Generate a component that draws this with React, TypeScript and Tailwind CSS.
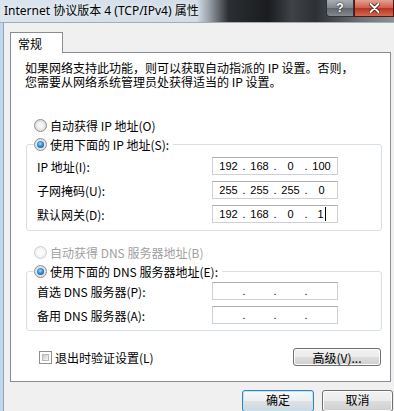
import type { ReactNode } from "react";

function Radio({ checked = false, disabled = false }: { checked?: boolean; disabled?: boolean }) {
  return (
    <span
      className={`flex h-[13px] w-[13px] shrink-0 items-center justify-center rounded-full border ${
        disabled
          ? "border-[#cfcfcf] bg-[radial-gradient(circle,#fbfbfb_30%,#e6e6e6_100%)]"
          : "border-[#8e8f8f] bg-[radial-gradient(circle,#f7f7f7_25%,#cdcdcd_100%)]"
      }`}
    >
      {checked && (
        <span className="h-[7px] w-[7px] rounded-full bg-[radial-gradient(circle_at_45%_40%,#a4dcff_0%,#2f8bd9_45%,#0c3b70_100%)]" />
      )}
    </span>
  );
}

function IpBox({ values, cursor = false }: { values?: string[]; cursor?: boolean }) {
  const fields = values ?? ["", "", "", ""];
  return (
    <div className="flex h-[18px] w-[126px] items-center border border-[#cdd0d5] border-t-[#abadb3] bg-white pl-[2px] font-['Liberation_Sans',sans-serif] text-[11px] leading-none text-black">
      {fields.map((v, i) => (
        <div key={i} className="flex items-center">
          <span className="flex w-[27px] items-center justify-center">
            {v}
            {cursor && i === 3 && <span className="ml-[1px] inline-block h-[14px] w-px bg-black" />}
          </span>
          {i < 3 && <span className="w-[4px] text-center">.</span>}
        </div>
      ))}
    </div>
  );
}

function WinButton({ children, primary = false, className = "" }: { children: ReactNode; primary?: boolean; className?: string }) {
  return (
    <div
      className={`flex items-center justify-center rounded-[3px] border ${
        primary
          ? "border-[#3c7fb1] bg-[linear-gradient(#f6f9fb_0%,#eceff1_50%,#dde2e6_50%,#d0d6db_100%)] shadow-[inset_0_0_0_1px_#bfe3f7]"
          : "border-[#707070] bg-[linear-gradient(#f2f2f2_0%,#ebebeb_50%,#dddddd_50%,#cfcfcf_100%)] shadow-[inset_0_0_0_1px_#fcfcfc]"
      } ${className}`}
    >
      {children}
    </div>
  );
}

function Row({ label, children }: { label: string; children: ReactNode }) {
  return (
    <div className="flex h-[24px] items-center">
      <span className="w-[185px] whitespace-nowrap pl-[10px]">{label}</span>
      {children}
    </div>
  );
}

export default function App() {
  return (
    <div className="relative h-[411px] w-[394px] overflow-hidden bg-[#f0f0f0] font-['Noto_Sans_CJK_SC',sans-serif] text-[12px] leading-[13px] text-black">
      {/* title bar */}
      <div className="flex h-[22px] bg-[linear-gradient(to_right,#dbe5ef_0%,#d2dce7_50%,#9aa1a9_53%,#2b2e32_58%,#1a1c1f_68%,#3f4246_74%,#2d3034_80%,#6f747a_92%,#8c9197_100%)]">
        <div className="flex flex-1 items-center whitespace-nowrap pb-[2px] pl-[4px] font-['Noto_Sans','Noto_Sans_CJK_SC',sans-serif] text-[12px] leading-[15px] text-black [text-shadow:0_0_6px_#ffffff]">
          Internet 协议版本 4 (TCP/IPv4) 属性
        </div>
        <div className="flex items-start">
          <div className="flex h-[17px] w-[28px] items-center justify-center rounded-bl-[4px] border border-t-0 border-[#2f3236] bg-[linear-gradient(#a9aeb4_0%,#80858c_50%,#60656c_50%,#858a90_100%)] font-['Liberation_Sans',sans-serif] text-[12px] font-bold leading-none text-white [text-shadow:0_0_2px_#000]">
            ?
          </div>
          <div className="flex h-[17px] w-[40px] items-center justify-center border border-t-0 border-[#4a1a14] bg-[linear-gradient(#e4a093_0%,#cf5d4a_50%,#b9321d_50%,#d4664f_100%)]">
            <svg width="11" height="10" viewBox="0 0 11 10">
              <path d="M1.5 1 L9.5 9 M9.5 1 L1.5 9" stroke="#3a0d08" strokeWidth="3.4" strokeLinecap="round" />
              <path d="M1.5 1 L9.5 9 M9.5 1 L1.5 9" stroke="#ffffff" strokeWidth="2" strokeLinecap="round" />
            </svg>
          </div>
        </div>
      </div>
      <div className="h-px bg-[#a3adb8]" />

      <div className="flex">
        <div className="w-[4px] border-r border-[#8fa4ba] bg-[#c2d6ec]" />
        <div className="flex-1 pl-[6px] pt-[9px]">
          {/* tab */}
          <div className="relative z-10 -mb-px flex h-[21px] w-[53px] items-center border border-b-0 border-[#898c95] bg-white pl-[7px]">
            常规
          </div>

          {/* panel */}
          <div className="w-[381px] border border-[#898c95] bg-white pb-[14px] pt-[8px]">
            <div className="whitespace-nowrap pl-[14px]">
              <div className="h-[14px] leading-[14px]">如果网络支持此功能，则可以获取自动指派的 IP 设置。否则，</div>
              <div className="h-[14px] leading-[14px]">您需要从网络系统管理员处获得适当的 IP 设置。</div>
            </div>

            <div className="mt-[27px] flex h-[19px] items-center gap-[3px] pl-[23px]">
              <Radio />
              <span>自动获得 IP 地址(O)</span>
            </div>

            <fieldset className="ml-[15px] w-[356px] rounded-[3px] border border-[#d5dfe5] pb-[4px]">
              <legend className="ml-[7px]">
                <div className="flex h-[19px] items-center gap-[3px] pr-[4px]">
                  <Radio checked />
                  <span>使用下面的 IP 地址(S):</span>
                </div>
              </legend>
              <Row label="IP 地址(I):">
                <IpBox values={["192", "168", "0", "100"]} />
              </Row>
              <Row label="子网掩码(U):">
                <IpBox values={["255", "255", "255", "0"]} />
              </Row>
              <Row label="默认网关(D):">
                <IpBox values={["192", "168", "0", "1"]} cursor />
              </Row>
            </fieldset>

            <div className="mt-[12px] flex h-[19px] items-center gap-[3px] pl-[23px] text-[#a0a0a0]">
              <Radio disabled />
              <span>自动获得 DNS 服务器地址(B)</span>
            </div>

            <fieldset className="ml-[15px] w-[356px] rounded-[3px] border border-[#d5dfe5] pb-[3px]">
              <legend className="ml-[7px]">
                <div className="flex h-[19px] items-center gap-[3px] pr-[4px]">
                  <Radio checked />
                  <span>使用下面的 DNS 服务器地址(E):</span>
                </div>
              </legend>
              <div className="-mt-[2px]">
                <Row label="首选 DNS 服务器(P):">
                  <IpBox />
                </Row>
                <Row label="备用 DNS 服务器(A):">
                  <IpBox />
                </Row>
              </div>
            </fieldset>

            <div className="mt-[16px] flex h-[20px] items-center justify-between pl-[28px] pr-[9px]">
              <div className="flex items-center gap-[3px]">
                <span className="h-[13px] w-[13px] border border-[#8e8f8f] bg-white p-[2px]">
                  <span className="block h-full w-full border border-[#b9b9b9] bg-[linear-gradient(135deg,#c9c9c9,#f7f7f7)]" />
                </span>
                <span>退出时验证设置(L)</span>
              </div>
              <WinButton className="h-[18px] w-[88px]">高级(V)...</WinButton>
            </div>
          </div>

          {/* dialog buttons */}
          <div className="mt-[8px] flex gap-[8px] pl-[232px]">
            <WinButton primary className="h-[22px] w-[72px] pb-[3px]">
              确定
            </WinButton>
            <WinButton className="h-[22px] w-[71px] pb-[3px]">取消</WinButton>
          </div>
        </div>
      </div>
    </div>
  );
}
